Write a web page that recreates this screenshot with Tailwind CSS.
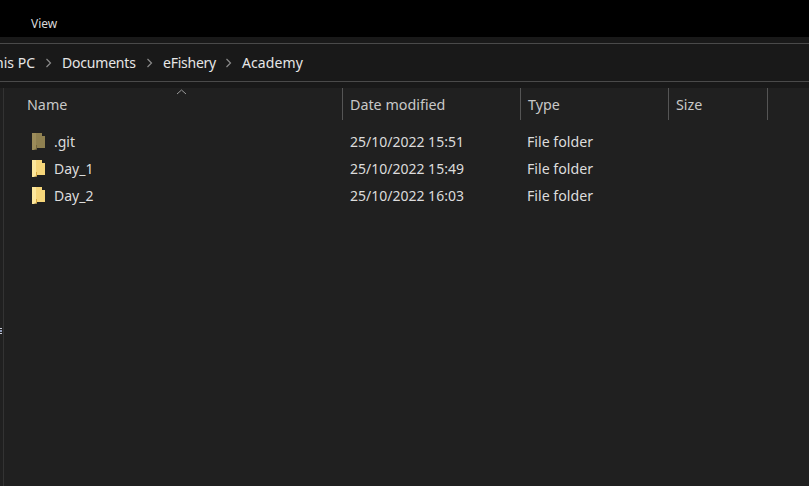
<!DOCTYPE html>
<html lang="en">
<head>
  <meta charset="UTF-8">
  <script src="https://cdn.jsdelivr.net/npm/@tailwindcss/browser@4"></script>
  <title>Academy</title>
</head>
<body class="relative w-[809px] h-[486px] overflow-hidden bg-[#202020] font-['Noto_Sans',sans-serif] text-[14px] text-[#dcdcdc]">
  <!-- ribbon -->
  <div class="h-[37px] bg-black pl-[31px] pt-[16px] text-[12px] leading-[16px] text-[#d8d8d8]">View</div>
  <div class="h-[6px] bg-[#191919]"></div>

  <!-- address bar -->
  <div class="h-[39px] flex items-center border-y border-[#4a4a4a] bg-[#191919] overflow-hidden text-[#e6e6e6]">
    <span class="ml-[-20px] w-[55px] shrink-0 whitespace-nowrap text-right">This PC</span>
    <svg class="mx-[10px] shrink-0" width="7" height="10" viewBox="0 0 6 10" fill="none" stroke="#8a8a8a" stroke-width="1.2"><path d="M1 1l4 4-4 4"/></svg>
    <span class="w-[74px] whitespace-nowrap tracking-[-0.2px]">Documents</span>
    <svg class="mx-[10px] shrink-0" width="7" height="10" viewBox="0 0 6 10" fill="none" stroke="#8a8a8a" stroke-width="1.2"><path d="M1 1l4 4-4 4"/></svg>
    <span class="w-[52px] whitespace-nowrap tracking-[-0.25px]">eFishery</span>
    <svg class="mx-[10px] shrink-0" width="7" height="10" viewBox="0 0 6 10" fill="none" stroke="#8a8a8a" stroke-width="1.2"><path d="M1 1l4 4-4 4"/></svg>
    <span class="tracking-[0.1px]">Academy</span>
  </div>
  <div class="h-[6px] bg-[#191919]"></div>

  <!-- file list -->
  <div class="relative">
    <div class="absolute left-[3px] top-0 h-[398px] w-px bg-[#333]"></div>
    <svg class="absolute left-[176px] top-[1px]" width="11" height="6" viewBox="0 0 11 6" fill="none" stroke="#9a9a9a"><path d="M1 5l4.500-4 4.500 4"/></svg>
    <div class="flex h-[32px] text-[14.3px] text-[#c8c8c8]">
      <div class="w-[343px] pl-[27px] pt-[6px] border-r border-[#555]">Name</div>
      <div class="w-[178px] pl-[7px] pt-[6px] border-r border-[#555]">Date modified</div>
      <div class="w-[148px] pl-[7px] pt-[6px] border-r border-[#555]">Type</div>
      <div class="w-[99px] pl-[7px] pt-[6px] border-r border-[#555]">Size</div>
    </div>
    <div class="mt-[8px] flex flex-col">
      <div class="flex h-[27px] items-center">
        <div class="w-[343px] pl-[32px] flex items-center gap-[9px]">
          <svg width="13" height="17" viewBox="0 0 13 17"><path d="M0 0h10v3h3v12H5v1.500L1 17H0z" fill="#8f8050"/><path d="M0 0h4v15l-2.500 2H0z" fill="#9c8c5a"/><path d="M4 12h1v4H4z" fill="#73653c"/></svg>
          <span>.git</span>
        </div>
        <div class="w-[178px] pl-[7px]">25/10/2022 15:51</div>
        <div class="pl-[6px] text-[14.2px]">File folder</div>
      </div>
      <div class="flex h-[27px] items-center">
        <div class="w-[343px] pl-[32px] flex items-center gap-[9px]">
          <svg width="13" height="17" viewBox="0 0 13 17"><path d="M0 0h10v3h3v12H5v1.500L1 17H0z" fill="#f6d67a"/><path d="M0 0h4v15l-2.500 2H0z" fill="#fde79c"/><path d="M4 12h1v4H4z" fill="#d8a93f"/></svg>
          <span>Day_1</span>
        </div>
        <div class="w-[178px] pl-[7px]">25/10/2022 15:49</div>
        <div class="pl-[6px] text-[14.2px]">File folder</div>
      </div>
      <div class="flex h-[27px] items-center">
        <div class="w-[343px] pl-[32px] flex items-center gap-[9px]">
          <svg width="13" height="17" viewBox="0 0 13 17"><path d="M0 0h10v3h3v12H5v1.500L1 17H0z" fill="#f6d67a"/><path d="M0 0h4v15l-2.500 2H0z" fill="#fde79c"/><path d="M4 12h1v4H4z" fill="#d8a93f"/></svg>
          <span>Day_2</span>
        </div>
        <div class="w-[178px] pl-[7px]">25/10/2022 16:03</div>
        <div class="pl-[6px] text-[14.2px]">File folder</div>
      </div>
    </div>
  </div>

  <!-- clipped sidebar marks at the left edge -->
  <div class="absolute left-0 top-[328px] flex flex-col gap-[1px]">
    <div class="h-[1px] w-[2px] bg-[#c8ccd8]"></div>
    <div class="h-[2px] w-[2px] bg-[#8f9bb8]"></div>
    <div class="h-[1px] w-[2px] bg-[#c8ccd8]"></div>
  </div>
</body>
</html>
